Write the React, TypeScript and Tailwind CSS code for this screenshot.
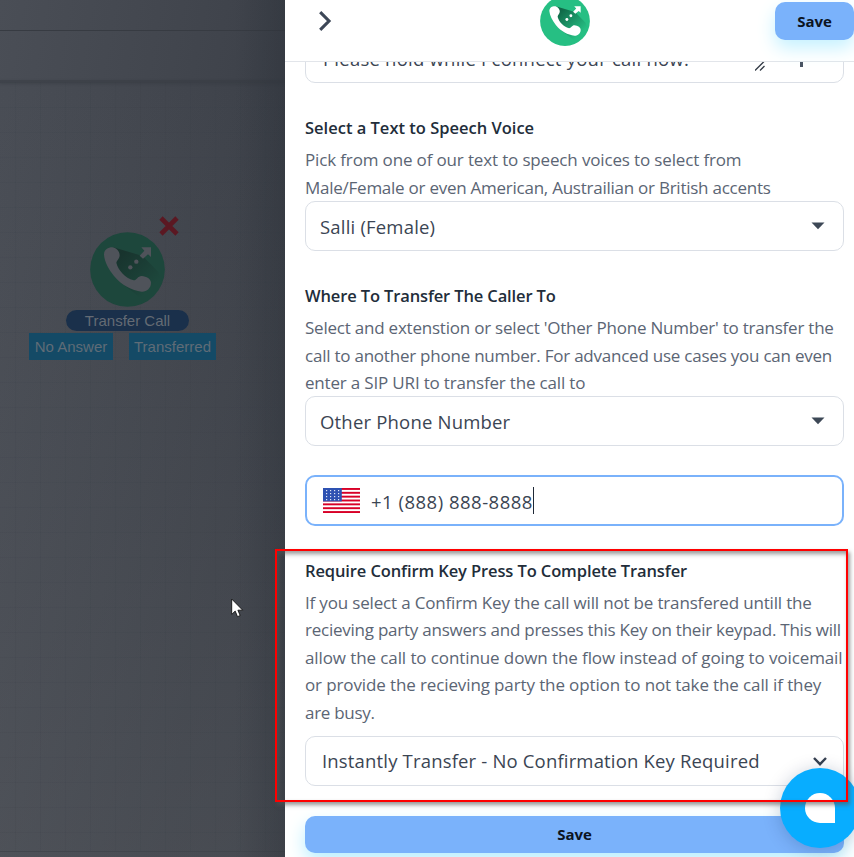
import React from 'react';

const sans = "font-['Open_Sans','Noto_Sans',sans-serif]";

type IconColors = { base: string; glyph: string; shade: string };

function CallIcon({ id, className, colors }: { id: string; className: string; colors: IconColors }) {
  return (
    <svg viewBox="0 0 225 225" className={className}>
      <defs>
        <linearGradient id={id} gradientUnits="userSpaceOnUse" x1="85" y1="75" x2="180" y2="172">
          <stop offset="0" stopColor={colors.shade} stopOpacity="0.85" />
          <stop offset="1" stopColor={colors.shade} stopOpacity="0" />
        </linearGradient>
      </defs>
      <circle cx="112.5" cy="112.5" r="112" fill={colors.base} />
      <path d="M70 46L158 72L205 120L214 145C207 175 188 200 160 205L90 150Z" fill={`url(#${id})`} />
      <path
        d="M42 68C42 52 55 46 66 46C78 46 89 58 89 70C89 80 80 86 79 93C85 115 105 138 131 145C140 145 143 132 155 132C170 133 184 142 183 153C183 168 170 180 155 179C125 175 95 160 72 132C55 110 44 90 42 68Z"
        fill={colors.glyph}
      />
      <circle cx="121" cy="106" r="6.5" fill={colors.glyph} />
      <circle cx="139" cy="89" r="6.5" fill={colors.glyph} />
      <path d="M154 46H183V75L174 67L159 80L149 71L163 56Z" fill={colors.glyph} />
    </svg>
  );
}

function Flag() {
  return (
    <svg viewBox="0 0 37 25" className="h-[25px] w-[37px] shrink-0">
      <rect width="37" height="25" fill="#fff" />
      {[0, 1, 2, 3, 4, 5, 6].map((i) => (
        <rect key={i} x="0" y={(i * 50) / 13} width="37" height={25 / 13} fill="#d80027" />
      ))}
      <rect width="18.8" height="13.4" fill="#2e52b2" />
      {[2, 5, 8, 11].map((y) =>
        [3, 7, 11, 15].map((x) => <rect key={`${x}-${y}`} x={x} y={y} width="1.2" height="1.2" fill="#dfe6f5" />),
      )}
    </svg>
  );
}

function Caret() {
  return (
    <svg viewBox="0 0 14 8" className="h-[8px] w-[14px]">
      <path d="M0.5 0.5H13.5L7 7.3Z" fill="#3d4856" />
    </svg>
  );
}

function Canvas() {
  return (
    <div className="relative h-full w-[285px] shrink-0 overflow-hidden bg-[linear-gradient(100deg,#4a4e56_0%,#42464e_42%,#3c4048_72%,#393d45_100%)]">
      <div className="absolute inset-0 bg-[linear-gradient(180deg,#5a5e6600_10%,#5e616660_100%)]" />
      <div className="absolute inset-x-0 top-[82px] bottom-[6px] bg-[linear-gradient(#353b431c_1px,transparent_1px),linear-gradient(90deg,#353b431c_1px,transparent_1px)] bg-size-[25px_25px] bg-position-[15px_0px]" />
      <div className="absolute inset-x-0 top-[30px] h-px bg-[#373b42]" />
      <div className="absolute inset-x-0 top-[80px] h-[3px] bg-[#373b42] opacity-50 shadow-[0_1px_3px_#373b42]" />
      <div className="absolute inset-x-0 bottom-[5px] h-px bg-[#42464d]" />
      <div className="absolute inset-y-0 right-0 w-[50px] bg-linear-to-r from-transparent to-[#252b3350]" />

      <CallIcon
        id="shadeNode"
        className="absolute top-[232px] left-[90px] h-[75px] w-[75px]"
        colors={{ base: '#1d473c', glyph: '#4f535a', shade: '#17302b' }}
      />
      <svg viewBox="0 0 20 20" className="absolute top-[216px] left-[159px] h-5 w-5">
        <path d="M2 2L18 18M18 2L2 18" stroke="#5b1822" strokeWidth="4.6" />
      </svg>
      <div className="absolute top-[310px] left-[66px] flex h-[21px] w-[123px] items-center justify-center rounded-full bg-[#1a304b] font-['Liberation_Sans',Arial,sans-serif] text-[15px] leading-none text-[#646b74]">
        Transfer Call
      </div>
      <div className="absolute top-[333px] left-[29px] flex h-[27px] w-[84px] items-center justify-center bg-[#144a66] font-['Liberation_Sans',Arial,sans-serif] text-[15px] leading-none text-[#5f6c77]">
        No Answer
      </div>
      <div className="absolute top-[333px] left-[129px] flex h-[27px] w-[87px] items-center justify-center bg-[#144a66] font-['Liberation_Sans',Arial,sans-serif] text-[15px] leading-none text-[#5f6c77]">
        Transferred
      </div>
    </div>
  );
}

function Line({ children, className }: { children: React.ReactNode; className: string }) {
  return <span className={`block whitespace-nowrap ${className}`}>{children}</span>;
}

const title = 'h-[28px] text-[16.5px] font-semibold leading-[28px] text-[#222d3a] whitespace-nowrap';
const copy = 'text-[17px] leading-[27.5px] text-[#5b6574]';
const field =
  'flex h-[50px] items-center justify-between rounded-[10px] border border-[#dbdfe6] bg-white pl-[14px] pr-[18px] text-[18.5px] tracking-[0.19px] text-[#3b4553] whitespace-nowrap';

export default function App() {
  return (
    <div className={`relative flex h-[857px] w-[854px] overflow-hidden bg-white ${sans}`}>
      <Canvas />
      <main className="flex h-full w-[569px] shrink-0 flex-col">
        <header className="flex h-[62px] shrink-0 items-start border-b border-[#e2e5ea] bg-white">
          <svg viewBox="0 0 14 22" className="mt-[10px] ml-[33px] h-[22px] w-[14px]">
            <path d="M2.2 2.2L11 11L2.2 19.8" fill="none" stroke="#3d4757" strokeWidth="3.1" />
          </svg>
          <CallIcon
            id="shadeHeader"
            className="-mt-[4px] ml-[208px] h-[50px] w-[50px]"
            colors={{ base: '#26bf83', glyph: '#ffffff', shade: '#0c5a3e' }}
          />
          <button className="mt-[2px] ml-auto flex h-[38px] w-[79px] items-center justify-center rounded-[10px] bg-[#7ab2fb] text-[15px] font-bold text-[#0c141f] shadow-[0_8px_18px_#c5f1ff]">
            Save
          </button>
        </header>

        <div className="flex min-h-0 flex-1 flex-col overflow-hidden px-[20px] pr-[10px]">
          <div className="-mt-[29px] flex h-[50px] shrink-0 justify-between rounded-[10px] border border-[#dbdfe6] pl-[17px] text-[18.5px] leading-[49px] tracking-[0.23px] text-[#3b4553]">
            <span className="whitespace-nowrap">Please hold while I connect your call now.</span>
            <div className="flex">
              <svg viewBox="0 0 10 10" className="mt-[27px] mr-[35px] h-[10px] w-[10px]">
                <path d="M0 9.5L9.5 0M5 9.5L9.5 5" stroke="#333b46" strokeWidth="1.3" />
              </svg>
              <div className="mt-[18px] mr-[40px] h-[15px] w-[3px] bg-[#4a5463]" />
            </div>
          </div>

          <section className="mt-[31px] shrink-0">
            <h2 className={title}>Select a Text to Speech Voice</h2>
            <p className={`mt-[4px] ${copy}`}>
              <Line className="tracking-[-0.15px]">Pick from one of our text to speech voices to select from</Line>
              <Line className="tracking-[-0.25px]">Male/Female or even American, Austrailian or British accents</Line>
            </p>
            <div className={field}>
              <span className="pt-[2px]">Salli (Female)</span>
              <Caret />
            </div>
          </section>

          <section className="mt-[31px] shrink-0">
            <h2 className={`tracking-[-0.13px] ${title}`}>Where To Transfer The Caller To</h2>
            <p className={`mt-[4px] -mb-px ${copy}`}>
              <Line className="tracking-[-0.22px]">Select and extenstion or select 'Other Phone Number' to transfer the</Line>
              <Line className="tracking-[-0.23px]">call to another phone number. For advanced use cases you can even</Line>
              <Line className="tracking-[-0.18px]">enter a SIP URI to transfer the call to</Line>
            </p>
            <div className={field}>
              <span className="pt-[2px]">Other Phone Number</span>
              <Caret />
            </div>
            <div className="mt-[29px] flex h-[51px] items-center rounded-[10px] border-2 border-[#7ab2fb] pl-[16px] text-[18.5px] tracking-[0.5px] whitespace-nowrap text-[#3b4553]">
              <Flag />
              <span className="ml-[11px] pt-[3px]">+1 (888) 888-8888</span>
              <span className="h-[27px] w-px bg-[#1f2937]" />
            </div>
          </section>

          <section className="mt-[31px] shrink-0">
            <h2 className={`tracking-[-0.11px] ${title}`}>Require Confirm Key Press To Complete Transfer</h2>
            <p className={`mt-[4px] ${copy}`}>
              <Line className="tracking-[-0.17px]">If you select a Confirm Key the call will not be transfered untill the</Line>
              <Line className="tracking-[-0.24px]">recieving party answers and presses this Key on their keypad. This will</Line>
              <Line className="tracking-[-0.1px]">allow the call to continue down the flow instead of going to voicemail</Line>
              <Line className="tracking-[-0.12px]">or provide the recieving party the option to not take the call if they</Line>
              <Line className="tracking-[-0.3px]">are busy.</Line>
            </p>
            <div className={`mt-[10px] ${field}`}>
              <span className="ml-[2px] tracking-[0.17px]">Instantly Transfer - No Confirmation Key Required</span>
              <svg viewBox="0 0 14 9" className="-mr-[2px] h-[9px] w-[14px]">
                <path d="M1 1L7 7.2L13 1" fill="none" stroke="#364150" strokeWidth="2.4" />
              </svg>
            </div>
            <button className="mt-[30px] flex h-[37px] w-full items-center justify-center rounded-[10px] bg-[#7ab2fb] text-[15px] font-bold text-[#0c141f] shadow-[0_8px_18px_#b9efff]">
              Save
            </button>
          </section>
        </div>
      </main>

      <div className="absolute top-[768px] left-[780px] flex h-[80px] w-[80px] items-center justify-center rounded-full bg-[#08adff] shadow-[0_2px_18px_#00205038]">
        <div className="h-[30px] w-[30px] rounded-full rounded-br-none bg-white" />
      </div>
      <div className="absolute top-[549px] left-[275px] h-[253px] w-[573px] border-2 border-[#f00] shadow-[2px_3px_4px_#55555599,inset_2px_3px_4px_#55555599]" />
      <svg viewBox="0 0 13 20" className="absolute top-[598px] left-[231px] h-[20px] w-[13px]">
        <path d="M0.7 1V16.4L4.2 13.1L6.5 18.7L9.2 17.5L6.9 12.2H11.7Z" fill="#fff" stroke="#111" strokeWidth="0.9" />
      </svg>
    </div>
  );
}
